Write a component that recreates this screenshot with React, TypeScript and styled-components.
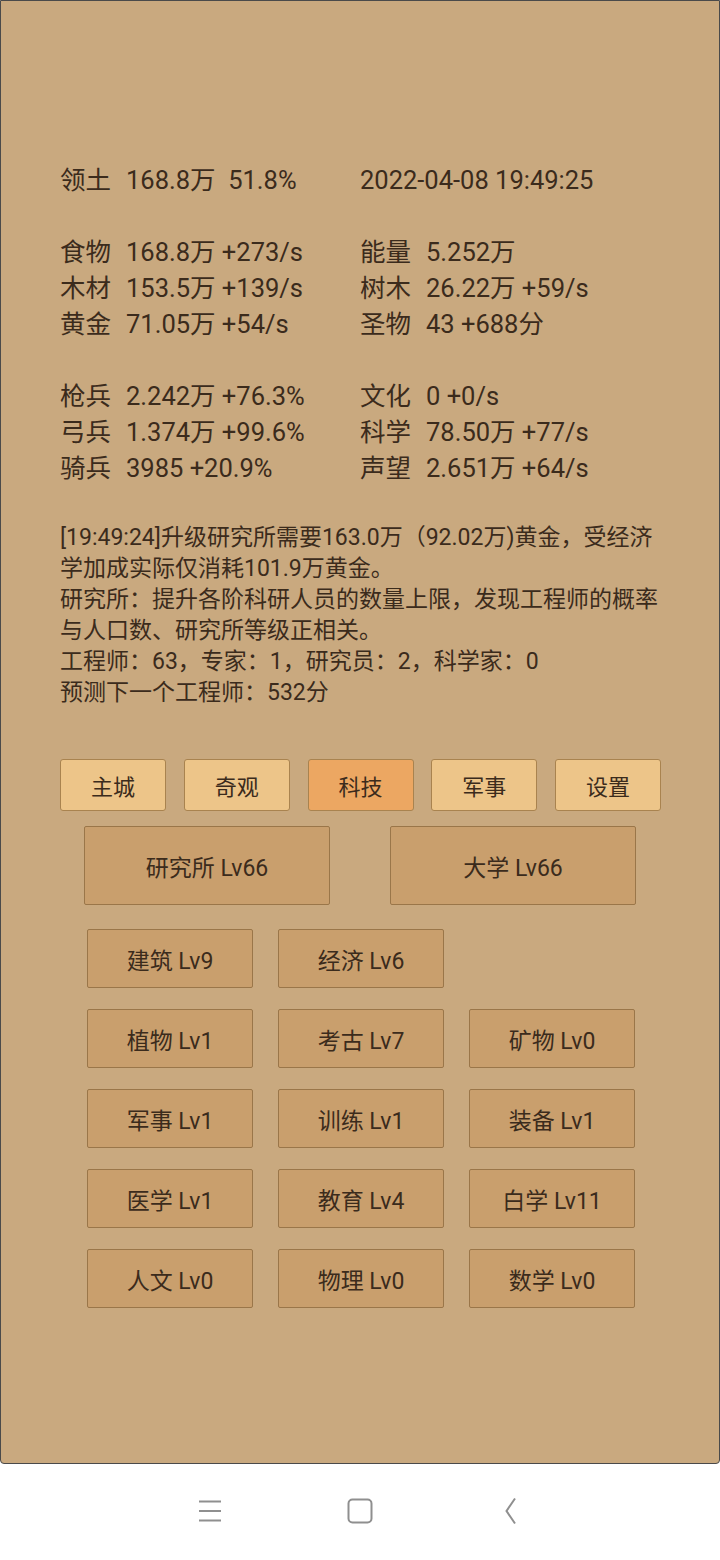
import * as React from "react";
import styled, { createGlobalStyle } from "styled-components";

const GlobalStyle = createGlobalStyle`
  html, body {
    margin: 0;
    padding: 0;
    background: #ffffff;
  }
  body {
    font-family: Roboto, "Noto Sans CJK SC", sans-serif;
    color: #3b2b1c;
  }
`;

const Screen = styled.div`
  width: 720px;
  height: 1560px;
  display: flex;
  flex-direction: column;
  overflow: hidden;
`;

const Frame = styled.div`
  height: 1464px;
  box-sizing: border-box;
  border: 1px solid #4a4a4a;
  border-radius: 0 0 4px 4px;
  background-color: #c9a97f;
  padding: 161px 0 0 0;
  display: flex;
  flex-direction: column;
`;

const Stats = styled.div`
  padding-left: 59px;
  display: flex;
  flex-direction: column;
  gap: 36px;
  font-size: 25.5px;
  line-height: 36px;
`;

const StatGroup = styled.div`
  display: grid;
  grid-template-columns: 300px 300px;
  grid-auto-rows: 36px;
`;

const Cell = styled.div`
  display: flex;
  white-space: pre;
`;

const Label = styled.span`
  width: 66px;
  flex: none;
`;

const Log = styled.div`
  margin: 36px 0 0 59px;
  width: 600px;
  font-size: 23px;
  line-height: 31px;
`;

const Tabs = styled.div`
  margin: 51px 0 0 59px;
  width: 601px;
  display: flex;
  justify-content: space-between;
`;

const Tab = styled.div<{ $active?: boolean }>`
  width: 106px;
  height: 52px;
  box-sizing: border-box;
  border: 1px solid #a9834f;
  border-radius: 3px;
  background-color: ${(p) => (p.$active ? "#eca762" : "#edc589")};
  display: flex;
  align-items: center;
  justify-content: center;
  font-size: 22px;
`;

const BigRow = styled.div`
  margin-top: 15px;
  display: flex;
  justify-content: center;
  gap: 60px;
`;

const LevelButton = styled.div<{ $big?: boolean }>`
  width: ${(p) => (p.$big ? "246px" : "166px")};
  height: ${(p) => (p.$big ? "79px" : "59px")};
  box-sizing: border-box;
  border: 1px solid #9a7649;
  border-radius: 2px;
  background-color: #c99f6d;
  display: flex;
  align-items: center;
  justify-content: center;
  font-size: 23px;
  white-space: pre;
`;

const TechGrid = styled.div`
  margin: 24px 0 0 86px;
  display: grid;
  grid-template-columns: repeat(3, 166px);
  column-gap: 25px;
  row-gap: 21px;
`;

const NavBar = styled.div`
  flex: 1;
  background: #ffffff;
  display: flex;
  align-items: center;
  justify-content: center;
  gap: 124px;
  padding-bottom: 2px;
`;

const NavIcon = styled.svg`
  width: 26px;
  height: 28px;
  stroke: #8f8f8f;
  fill: none;
  stroke-width: 2;
`;

type Row = [string, string, string, string];

const groups: Row[][] = [
  [["领土", "168.8万  51.8%", "", "2022-04-08 19:49:25"]],
  [
    ["食物", "168.8万 +273/s", "能量", "5.252万"],
    ["木材", "153.5万 +139/s", "树木", "26.22万 +59/s"],
    ["黄金", "71.05万 +54/s", "圣物", "43 +688分"],
  ],
  [
    ["枪兵", "2.242万 +76.3%", "文化", "0 +0/s"],
    ["弓兵", "1.374万 +99.6%", "科学", "78.50万 +77/s"],
    ["骑兵", "3985 +20.9%", "声望", "2.651万 +64/s"],
  ],
];

const tabs = ["主城", "奇观", "科技", "军事", "设置"];

const techs: (string | null)[] = [
  "建筑 Lv9", "经济 Lv6", null,
  "植物 Lv1", "考古 Lv7", "矿物 Lv0",
  "军事 Lv1", "训练 Lv1", "装备 Lv1",
  "医学 Lv1", "教育 Lv4", "白学 Lv11",
  "人文 Lv0", "物理 Lv0", "数学 Lv0",
];

export default function App() {
  return (
    <Screen>
      <GlobalStyle />
      <Frame>
        <Stats>
          {groups.map((rows, g) => (
            <StatGroup key={g}>
              {rows.map(([l1, v1, l2, v2], i) => (
                <React.Fragment key={i}>
                  <Cell>
                    <Label>{l1}</Label>
                    {v1}
                  </Cell>
                  <Cell>
                    {l2 ? <Label>{l2}</Label> : null}
                    {v2}
                  </Cell>
                </React.Fragment>
              ))}
            </StatGroup>
          ))}
        </Stats>
        <Log>
          [19:49:24]升级研究所需要163.0万（92.02万)黄金，受经济学加成实际仅消耗101.9万黄金。
          <br />
          研究所：提升各阶科研人员的数量上限，发现工程师的概率与人口数、研究所等级正相关。
          <br />
          工程师：63，专家：1，研究员：2，科学家：0
          <br />
          预测下一个工程师：532分
        </Log>
        <Tabs>
          {tabs.map((t) => (
            <Tab key={t} $active={t === "科技"}>
              {t}
            </Tab>
          ))}
        </Tabs>
        <BigRow>
          <LevelButton $big>研究所 Lv66</LevelButton>
          <LevelButton $big>大学 Lv66</LevelButton>
        </BigRow>
        <TechGrid>
          {techs.map((t, i) =>
            t ? <LevelButton key={i}>{t}</LevelButton> : <div key={i} />
          )}
        </TechGrid>
      </Frame>
      <NavBar>
        <NavIcon viewBox="0 0 26 28">
          <path d="M2 4.5h22M2 14h22M2 23.5h22" />
        </NavIcon>
        <NavIcon viewBox="0 0 26 28">
          <rect x="1.5" y="2.5" width="23" height="23" rx="4" />
        </NavIcon>
        <NavIcon viewBox="0 0 26 28">
          <path d="M18 1.5L9.5 14l8.5 12.5" />
        </NavIcon>
      </NavBar>
    </Screen>
  );
}
